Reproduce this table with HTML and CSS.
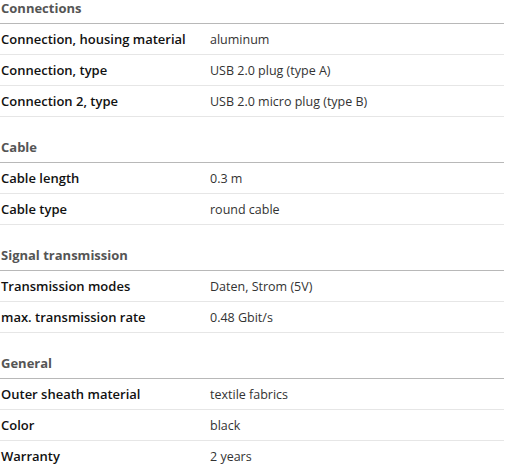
FILE: index.html
```html
<!DOCTYPE html>
<html>
<head>
<meta charset="utf-8">
<link rel="stylesheet" href="styles.css">
</head>
<body>
<div class="specs">
  <section class="group">
    <h3 class="group-title">Connections</h3>
    <div class="row"><div class="label">Connection, housing material</div><div class="value">aluminum</div></div>
    <div class="row"><div class="label">Connection, type</div><div class="value">USB 2.0 plug (type A)</div></div>
    <div class="row"><div class="label">Connection 2, type</div><div class="value">USB 2.0 micro plug (type B)</div></div>
  </section>
  <section class="group">
    <h3 class="group-title">Cable</h3>
    <div class="row"><div class="label">Cable length</div><div class="value">0.3 m</div></div>
    <div class="row"><div class="label">Cable type</div><div class="value">round cable</div></div>
  </section>
  <section class="group">
    <h3 class="group-title">Signal transmission</h3>
    <div class="row"><div class="label">Transmission modes</div><div class="value">Daten, Strom (5V)</div></div>
    <div class="row"><div class="label">max. transmission rate</div><div class="value">0.48 Gbit/s</div></div>
  </section>
  <section class="group">
    <h3 class="group-title">General</h3>
    <div class="row"><div class="label">Outer sheath material</div><div class="value">textile fabrics</div></div>
    <div class="row"><div class="label">Color</div><div class="value">black</div></div>
    <div class="row"><div class="label">Warranty</div><div class="value">2 years</div></div>
  </section>
</div>
</body>
</html>
```
FILE: styles.css
```css
html, body {
  margin: 0;
  padding: 0;
  background: #fff;
}
body {
  font-family: "Open Sans", "Liberation Sans", sans-serif;
}
.specs {
  width: 504px;
  display: flex;
  flex-direction: column;
  gap: 22px;
}
.group-title {
  margin: 0;
  font-size: 13px;
  font-weight: 700;
  line-height: 16px;
  color: #555;
  padding: 0 0 7px 1px;
  border-bottom: 1px solid #b8b8b8;
}
.row {
  display: grid;
  grid-template-columns: 210px 1fr;
  height: 30px;
  align-items: center;
  border-bottom: 1px solid #e6e6e6;
}
.label {
  font-size: 13px;
  font-weight: 600;
  color: #111;
  padding-left: 1px;
}
.value {
  font-size: 12.5px;
  color: #333;
}
```
